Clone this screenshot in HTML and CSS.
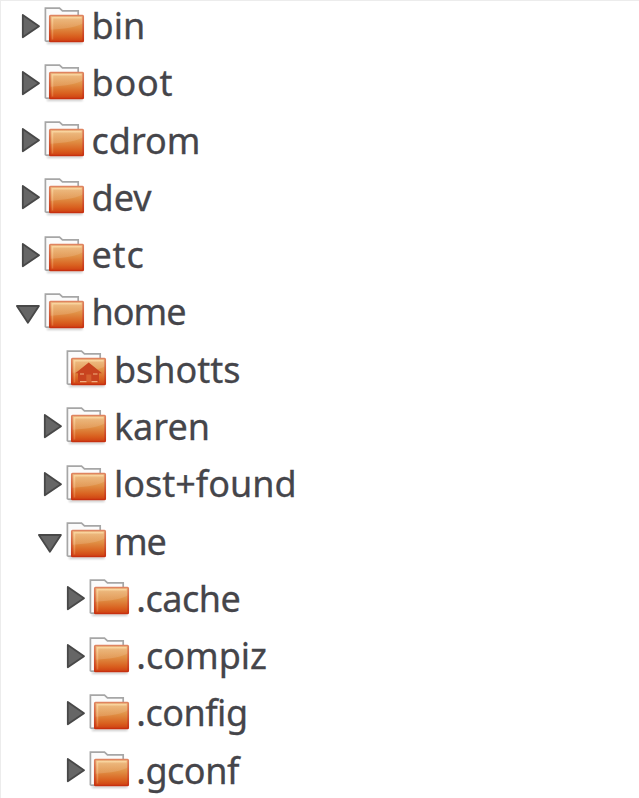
FILE: index.html
```
<!DOCTYPE html>
<html lang="en">
<head>
<meta charset="utf-8">
<title>Folders</title>
<link rel="stylesheet" href="styles.css">
</head>
<body>
<svg class="defs" width="0" height="0" aria-hidden="true">
  <defs>
    <linearGradient id="body" x1="0" y1="0" x2="0" y2="1">
      <stop offset="0" stop-color="#efbd80"/>
      <stop offset=".45" stop-color="#e09045"/>
      <stop offset=".8" stop-color="#d9601f"/>
      <stop offset="1" stop-color="#cf4012"/>
    </linearGradient>
    <linearGradient id="edge" x1="0" y1="0" x2="0" y2="1">
      <stop offset="0" stop-color="#df8460"/>
      <stop offset="1" stop-color="#c7300f"/>
    </linearGradient>
    <linearGradient id="shine" x1="0" y1="0" x2="0" y2="1">
      <stop offset="0" stop-color="#fff" stop-opacity=".08"/>
      <stop offset="1" stop-color="#fff" stop-opacity=".14"/>
    </linearGradient>
    <linearGradient id="inner" x1="0" y1="0" x2="0" y2="1">
      <stop offset="0" stop-color="#ffe3b0" stop-opacity=".6"/>
      <stop offset="1" stop-color="#f5a070" stop-opacity=".35"/>
    </linearGradient>
    <filter id="soft" x="-20" y="20" width="80" height="30" filterUnits="userSpaceOnUse"><feGaussianBlur stdDeviation="1"/></filter>
    <symbol id="folder" viewBox="0 0 42 40">
      <path d="M3 37H38.5" stroke="#777" stroke-width="2" opacity=".4" filter="url(#soft)"/>
      <path d="M1.4 35.2V2.1H15.5L18.5 4.8H34.2V10" fill="#fbfbfb" stroke="#a6a6a6" stroke-width="1.7"/>
      <path d="M1.4 35.2H6" stroke="#a6a6a6" stroke-width="1.7"/>
      <rect x="5.8" y="9.5" width="33.4" height="26" rx=".7" fill="url(#body)" stroke="url(#edge)" stroke-width="1.7"/>
      <path d="M6.7 10.4H38.3V17.5Q30 22.3 6.7 23.8Z" fill="url(#shine)"/>
      <path d="M8.5 33.5V11.8H37.5" fill="none" stroke="url(#inner)" stroke-width="1.5"/>
    </symbol>
    <symbol id="home" viewBox="0 0 42 40">
      <use href="#folder"/>
      <path d="M22.7 13.5L36 24.3H33V33H12V24.3H9.3Z" fill="#c8431f"/>
      <path d="M14 25H18M27 25H31.5" stroke="#e28d60" stroke-width="1.5"/>
      <path d="M20.3 25.5H25.3V33H20.3Z" fill="#d5602f"/>
      <path d="M14 32.6H20.5M25.5 32.6H31.5" stroke="#f1ad80" stroke-width="1.4"/>
    </symbol>
    <symbol id="closed" viewBox="0 0 30 40">
      <path d="M8.8 9L25 20.2L8.8 31.3Z" fill="#666" stroke="#484848" stroke-width="1.8" stroke-linejoin="round"/>
    </symbol>
    <symbol id="open" viewBox="0 0 30 40">
      <path d="M2.9 14H24.9L13.9 30.8Z" fill="#666" stroke="#484848" stroke-width="1.8" stroke-linejoin="round"/>
    </symbol>
  </defs>
</svg>
<ul class="tree">
  <li><div class="row"><svg class="toggle"><use href="#closed"/></svg><svg class="icon"><use href="#folder"/></svg><span class="name">bin</span></div></li>
  <li><div class="row"><svg class="toggle"><use href="#closed"/></svg><svg class="icon"><use href="#folder"/></svg><span class="name loose">boot</span></div></li>
  <li><div class="row"><svg class="toggle"><use href="#closed"/></svg><svg class="icon"><use href="#folder"/></svg><span class="name">cdrom</span></div></li>
  <li><div class="row"><svg class="toggle"><use href="#closed"/></svg><svg class="icon"><use href="#folder"/></svg><span class="name">dev</span></div></li>
  <li><div class="row"><svg class="toggle"><use href="#closed"/></svg><svg class="icon"><use href="#folder"/></svg><span class="name loose">etc</span></div></li>
  <li><div class="row"><svg class="toggle"><use href="#open"/></svg><svg class="icon"><use href="#folder"/></svg><span class="name tight">home</span></div>
    <ul>
      <li><div class="row"><svg class="toggle"></svg><svg class="icon"><use href="#home"/></svg><span class="name">bshotts</span></div></li>
      <li><div class="row"><svg class="toggle"><use href="#closed"/></svg><svg class="icon"><use href="#folder"/></svg><span class="name">karen</span></div></li>
      <li><div class="row"><svg class="toggle"><use href="#closed"/></svg><svg class="icon"><use href="#folder"/></svg><span class="name">lost+found</span></div></li>
      <li><div class="row"><svg class="toggle"><use href="#open"/></svg><svg class="icon"><use href="#folder"/></svg><span class="name tight">me</span></div>
        <ul>
          <li><div class="row"><svg class="toggle"><use href="#closed"/></svg><svg class="icon"><use href="#folder"/></svg><span class="name snug">.cache</span></div></li>
          <li><div class="row"><svg class="toggle"><use href="#closed"/></svg><svg class="icon"><use href="#folder"/></svg><span class="name">.compiz</span></div></li>
          <li><div class="row"><svg class="toggle"><use href="#closed"/></svg><svg class="icon"><use href="#folder"/></svg><span class="name snug">.config</span></div></li>
          <li><div class="row"><svg class="toggle"><use href="#closed"/></svg><svg class="icon"><use href="#folder"/></svg><span class="name snug">.gconf</span></div></li>
        </ul>
      </li>
    </ul>
  </li>
</ul>
</body>
</html>
```
FILE: styles.css
```
* { box-sizing: border-box; }

body {
  margin: 0;
  height: 798px;
  overflow: hidden;
  background: #fff;
  border-top: 1px solid #ececec;
  border-left: 1px solid #ececec;
  color: #45454a;
  font-family: "Noto Sans", "Open Sans", sans-serif;
  font-size: 36px;
}

.defs { display: block; }

ul {
  margin: 0;
  padding: 0 0 0 22.4px;
  list-style: none;
}

.tree {
  margin-top: -4px;
  padding-left: 13px;
}

.row {
  display: flex;
  align-items: center;
  height: 57.27px;
}

.toggle {
  flex: none;
  width: 30px;
  height: 40px;
}

.icon {
  flex: none;
  width: 42px;
  height: 40px;
}

.name {
  margin-left: 5.5px;
  line-height: 57px;
  white-space: nowrap;
  -webkit-text-stroke: 0.3px currentColor;
}

.loose { letter-spacing: 0.8px; }

.tight { letter-spacing: -1px; }

.snug { letter-spacing: -0.5px; }
```
